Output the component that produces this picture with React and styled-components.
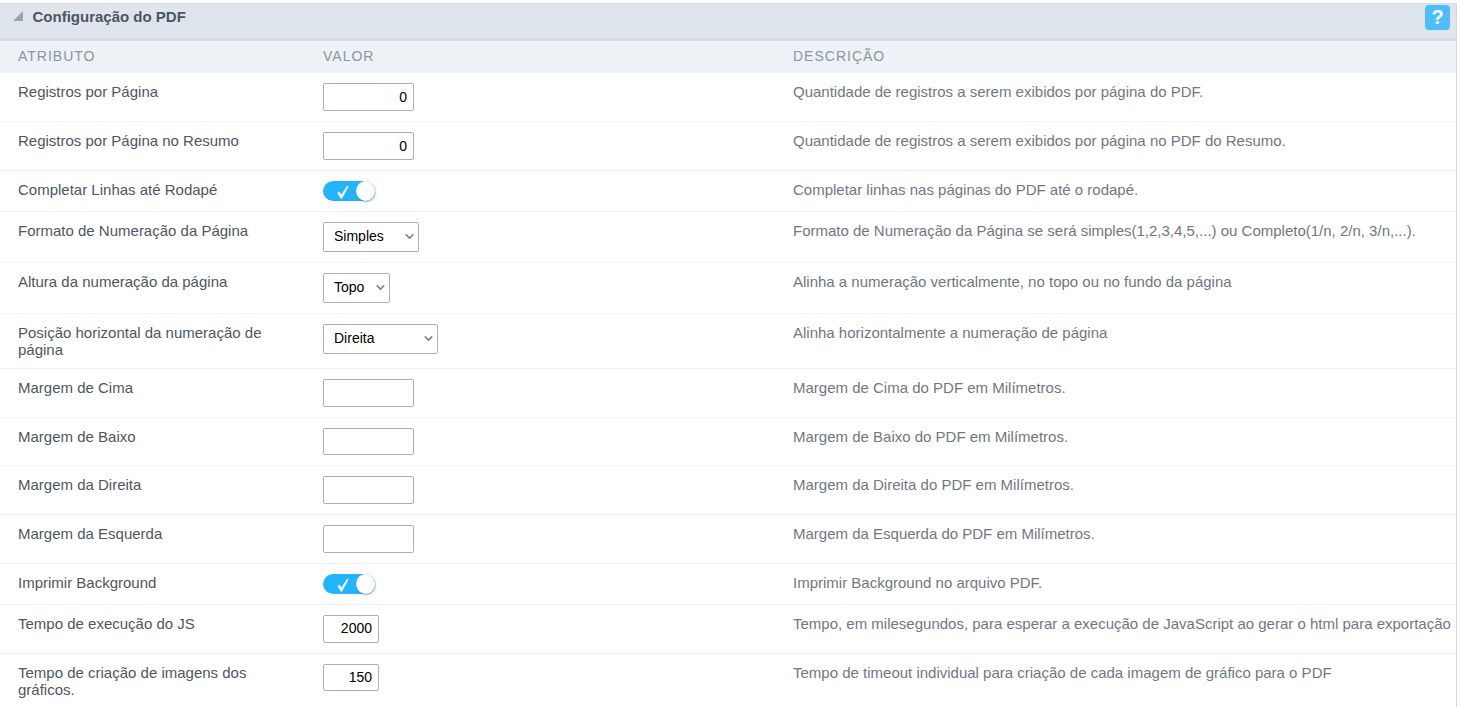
import React from 'react';
import styled, { createGlobalStyle } from 'styled-components';

const GlobalStyle = createGlobalStyle`
  html, body {
    margin: 0;
    padding: 0;
    background: #fff;
    overflow: hidden;
  }
  body {
    font-family: 'Liberation Sans', Arial, sans-serif;
  }
`;

const Panel = styled.div`
  width: 1457px;
  height: 704px;
  margin-top: 3px;
  border-top: 1px solid #d7dde3;
  border-right: 1px solid #cfd9e0;
  box-sizing: border-box;
  overflow: hidden;
`;

const Header = styled.div`
  height: 33px;
  display: flex;
  align-items: flex-start;
  justify-content: space-between;
  background: #dfe5ec;
  border-bottom: 3px solid #d3dce3;
  padding: 1px 6px 0 13px;
`;

const Title = styled.div`
  display: flex;
  align-items: center;
  gap: 9.5px;
  height: 22px;
  font-size: 15px;
  font-weight: bold;
  color: #4b5563;
`;

const Arrow = styled.span`
  width: 0;
  height: 0;
  border-left: 10px solid transparent;
  border-bottom: 10px solid #9aa3ad;
`;

const Help = styled.div`
  width: 25px;
  height: 25px;
  border-radius: 4px;
  background: #4ebdfb;
  color: #fff;
  font-size: 20px;
  font-weight: bold;
  line-height: 25px;
  text-align: center;
`;

const Grid = styled.div`
  display: grid;
  grid-template-columns: 323px 470px 1fr;
`;

const Head = styled.div`
  display: contents;
  & > div {
    height: 32.25px;
    line-height: 31px;
    background: #eef1f5;
    font-size: 14px;
    letter-spacing: 1px;
    color: #87989f;
  }
  & > div:first-child {
    padding-left: 18px;
  }
`;

const Row = styled.div`
  display: contents;
  & > div {
    border-bottom: 1px solid #eef1f5;
    padding-top: 10px;
    padding-bottom: 10px;
    font-size: 15px;
    line-height: 17px;
    min-width: 0;
  }
`;

const Label = styled.div`
  padding-left: 18px;
  padding-right: 40px;
  color: #4f5661;
`;

const Value = styled.div`
  display: flex;
  align-items: flex-start;
`;

const Description = styled.div`
  color: #72777f;
  white-space: nowrap;
`;

const NumberInput = styled.input`
  width: ${(p) => p.$width}px;
  height: 27.75px;
  box-sizing: border-box;
  border: 1px solid #a9afb8;
  border-radius: 2px;
  background: #fff;
  padding: 0 6px 0.5px 5px;
  text-align: right;
  font-family: inherit;
  font-size: 14px;
  color: #000;
`;

const SelectWrap = styled.div`
  position: relative;
  width: ${(p) => p.$width}px;
  height: 30px;
`;

const Select = styled.select`
  appearance: none;
  width: 100%;
  height: 100%;
  box-sizing: border-box;
  border: 1px solid #a9afb8;
  border-radius: 2px;
  background: #fff;
  padding: 0 10px 2px;
  font-family: inherit;
  font-size: 14px;
  color: #000;
`;

const Chevron = styled.svg`
  position: absolute;
  right: 5px;
  top: 12px;
  width: 9px;
  height: 5px;
  fill: none;
  stroke: #808080;
  stroke-width: 1.9;
  pointer-events: none;
`;

const Toggle = styled.div`
  position: relative;
  width: 52px;
  height: 20px;
  border-radius: 10px;
  background: #23b4fb;
`;

const Knob = styled.span`
  position: absolute;
  top: 0;
  right: 0;
  width: 19px;
  height: 20px;
  border-radius: 50%;
  background: #fff;
  box-shadow: 0.5px 1px 2px rgba(0, 80, 130, 0.5);
`;

const Tick = styled.svg`
  position: absolute;
  left: 14px;
  top: 4px;
  width: 12px;
  height: 14px;
  fill: #fff;
`;

const rows = [
  { label: 'Registros por Página', type: 'input', value: '0', width: 91, desc: 'Quantidade de registros a serem exibidos por página do PDF.' },
  { label: 'Registros por Página no Resumo', type: 'input', value: '0', width: 91, desc: 'Quantidade de registros a serem exibidos por página no PDF do Resumo.' },
  { label: 'Completar Linhas até Rodapé', type: 'toggle', desc: 'Completar linhas nas páginas do PDF até o rodapé.' },
  { label: 'Formato de Numeração da Página', type: 'select', value: 'Simples', width: 96, desc: 'Formato de Numeração da Página se será simples(1,2,3,4,5,...) ou Completo(1/n, 2/n, 3/n,...).' },
  { label: 'Altura da numeração da página', type: 'select', value: 'Topo', width: 67, desc: 'Alinha a numeração verticalmente, no topo ou no fundo da página' },
  { label: 'Posição horizontal da numeração de página', type: 'select', value: 'Direita', width: 115, desc: 'Alinha horizontalmente a numeração de página' },
  { label: 'Margem de Cima', type: 'input', value: '', width: 91, desc: 'Margem de Cima do PDF em Milímetros.' },
  { label: 'Margem de Baixo', type: 'input', value: '', width: 91, desc: 'Margem de Baixo do PDF em Milímetros.' },
  { label: 'Margem da Direita', type: 'input', value: '', width: 91, desc: 'Margem da Direita do PDF em Milímetros.' },
  { label: 'Margem da Esquerda', type: 'input', value: '', width: 91, desc: 'Margem da Esquerda do PDF em Milímetros.' },
  { label: 'Imprimir Background', type: 'toggle', desc: 'Imprimir Background no arquivo PDF.' },
  { label: 'Tempo de execução do JS', type: 'input', value: '2000', width: 56, desc: 'Tempo, em milesegundos, para esperar a execução de JavaScript ao gerar o html para exportação' },
  { label: 'Tempo de criação de imagens dos gráficos.', type: 'input', value: '150', width: 56, desc: 'Tempo de timeout individual para criação de cada imagem de gráfico para o PDF' },
];

const Control = ({ row }) => {
  if (row.type === 'toggle') {
    return (
      <Toggle>
        <Tick viewBox="0 0 12 14">
          <path d="M0.5 8 L2 6.6 L4.4 9.4 L10.4 0.6 L11.6 1.4 L5 13.4 L3.6 13.4 Z" />
        </Tick>
        <Knob />
      </Toggle>
    );
  }
  if (row.type === 'select') {
    return (
      <SelectWrap $width={row.width}>
        <Select defaultValue={row.value}>
          <option>{row.value}</option>
        </Select>
        <Chevron viewBox="0 0 10 6">
          <path d="M0.5 0.5 L5 5 L9.5 0.5" />
        </Chevron>
      </SelectWrap>
    );
  }
  return <NumberInput $width={row.width} defaultValue={row.value} />;
};

export default function App() {
  return (
    <>
      <GlobalStyle />
      <Panel>
        <Header>
          <Title>
            <Arrow />
            Configuração do PDF
          </Title>
          <Help>?</Help>
        </Header>
        <Grid>
          <Head>
            <div>ATRIBUTO</div>
            <div>VALOR</div>
            <div>DESCRIÇÃO</div>
          </Head>
          {rows.map((row) => (
            <Row key={row.label}>
              <Label>{row.label}</Label>
              <Value>
                <Control row={row} />
              </Value>
              <Description>{row.desc}</Description>
            </Row>
          ))}
        </Grid>
      </Panel>
    </>
  );
}
